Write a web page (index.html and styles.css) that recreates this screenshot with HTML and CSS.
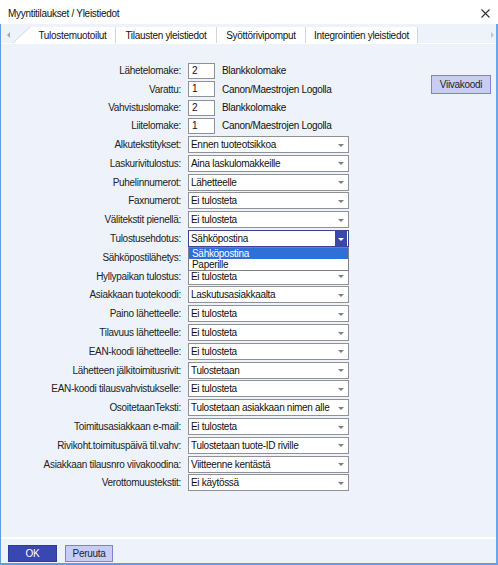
FILE: index.html
```html
<!DOCTYPE html>
<html lang="fi">
<head>
<meta charset="utf-8">
<title>Myyntitilaukset / Yleistiedot</title>
<link rel="stylesheet" href="styles.css">
</head>
<body>
<div class="window">
  <div class="titlebar">
    <span class="title">Myyntitilaukset / Yleistiedot</span>
    <svg class="close" width="9" height="9" viewBox="0 0 9 9"><path d="M0.5 0.5L8.5 8.5M8.5 0.5L0.5 8.5" stroke="#333" stroke-width="1.1" fill="none"/></svg>
  </div>
  <div class="frame">
    <div class="tabstrip">
      <div class="tab-prev"><span class="arrow-left"></span></div>
      <svg class="tab-slant" width="17" height="16" viewBox="0 0 17 16"><polygon points="0,16 17,0 17,16" fill="#fff"/><line x1="0" y1="16" x2="17" y2="0" stroke="#d3d6de" stroke-width="1"/></svg>
      <div class="tabs">
        <div class="tab tab-active t1">Tulostemuotoilut</div>
        <div class="tab t2">Tilausten yleistiedot</div>
        <div class="tab t3">Syöttörivipomput</div>
        <div class="tab t4">Integrointien yleistiedot</div>
      </div>
      <div class="tab-next"><span class="arrow-right"></span></div>
    </div>

    <div class="panel">
      <div class="form">
        <label class="lbl">Lähetelomake:</label>
        <div class="inrow"><span class="box">2</span><span class="boxtext">Blankkolomake</span></div>
        <label class="lbl">Varattu:</label>
        <div class="inrow"><span class="box">1</span><span class="boxtext">Canon/Maestrojen Logolla</span></div>
        <label class="lbl">Vahvistuslomake:</label>
        <div class="inrow"><span class="box">2</span><span class="boxtext">Blankkolomake</span></div>
        <label class="lbl">Liitelomake:</label>
        <div class="inrow"><span class="box">1</span><span class="boxtext">Canon/Maestrojen Logolla</span></div>

        <label class="lbl">Alkutekstitykset:</label>
        <div class="select"><span class="val">Ennen tuoteotsikkoa</span><span class="caret"></span></div>
        <label class="lbl">Laskurivitulostus:</label>
        <div class="select"><span class="val">Aina laskulomakkeille</span><span class="caret"></span></div>
        <label class="lbl">Puhelinnumerot:</label>
        <div class="select"><span class="val">Lähetteelle</span><span class="caret"></span></div>
        <label class="lbl">Faxnumerot:</label>
        <div class="select"><span class="val">Ei tulosteta</span><span class="caret"></span></div>
        <label class="lbl">Välitekstit pienellä:</label>
        <div class="select"><span class="val">Ei tulosteta</span><span class="caret"></span></div>
        <label class="lbl">Tulostusehdotus:</label>
        <div class="select select-open">
          <span class="val">Sähköpostina</span><span class="dropbtn"><span class="caret caret-white"></span></span>
          <div class="droplist">
            <div class="opt opt-selected">Sähköpostina</div>
            <div class="opt">Paperille</div>
          </div>
        </div>
        <label class="lbl">Sähköpostilähetys:</label>
        <div class="select"><span class="val"></span><span class="caret"></span></div>
        <label class="lbl">Hyllypaikan tulostus:</label>
        <div class="select"><span class="val">Ei tulosteta</span><span class="caret"></span></div>
        <label class="lbl">Asiakkaan tuotekoodi:</label>
        <div class="select"><span class="val">Laskutusasiakkaalta</span><span class="caret"></span></div>
        <label class="lbl">Paino lähetteelle:</label>
        <div class="select"><span class="val">Ei tulosteta</span><span class="caret"></span></div>
        <label class="lbl">Tilavuus lähetteelle:</label>
        <div class="select"><span class="val">Ei tulosteta</span><span class="caret"></span></div>
        <label class="lbl">EAN-koodi lähetteelle:</label>
        <div class="select"><span class="val">Ei tulosteta</span><span class="caret"></span></div>
        <label class="lbl">Lähetteen jälkitoimitusrivit:</label>
        <div class="select"><span class="val">Tulostetaan</span><span class="caret"></span></div>
        <label class="lbl">EAN-koodi tilausvahvistukselle:</label>
        <div class="select"><span class="val">Ei tulosteta</span><span class="caret"></span></div>
        <label class="lbl">OsoitetaanTeksti:</label>
        <div class="select"><span class="val">Tulostetaan asiakkaan nimen alle</span><span class="caret"></span></div>
        <label class="lbl">Toimitusasiakkaan e-mail:</label>
        <div class="select"><span class="val">Ei tulosteta</span><span class="caret"></span></div>
        <label class="lbl">Rivikoht.toimituspäivä til.vahv:</label>
        <div class="select"><span class="val">Tulostetaan tuote-ID riville</span><span class="caret"></span></div>
        <label class="lbl">Asiakkaan tilausnro viivakoodina:</label>
        <div class="select"><span class="val">Viitteenne kentästä</span><span class="caret"></span></div>
        <label class="lbl">Verottomuustekstit:</label>
        <div class="select"><span class="val">Ei käytössä</span><span class="caret"></span></div>
      </div>
      <div class="side">
        <button class="btn btn-light btn-barcode">Viivakoodi</button>
      </div>
    </div>

    <div class="buttonbar">
      <button class="btn btn-primary">OK</button>
      <button class="btn btn-light">Peruuta</button>
    </div>
  </div>
</div>
</body>
</html>
```

FILE: styles.css
```css
html, body {
  margin: 0;
  padding: 0;
}

body {
  width: 498px;
  height: 565px;
  overflow: hidden;
  background: #ffffff;
  font-family: "Liberation Sans", Arial, sans-serif;
  font-size: 10px;
  letter-spacing: -0.3px;
  color: #1e1e1e;
}

.window {
  display: flex;
  flex-direction: column;
  height: 565px;
}

/* title bar */
.titlebar {
  height: 24px;
  flex: none;
  display: flex;
  align-items: center;
  justify-content: space-between;
  padding: 0 8px 0 8px;
  background: #ffffff;
}

.title {
  color: #111;
  padding-top: 2px;
}

.close {
  margin-top: 2px;
}

/* window frame */
.frame {
  flex: 1;
  display: flex;
  flex-direction: column;
  border-left: 1px solid #5b9de6;
  border-right: 2px solid #6aa7ea;
  border-bottom: 2px solid #5b9de6;
  min-height: 0;
}

/* tab strip */
.tabstrip {
  height: 20px;
  flex: none;
  display: flex;
  align-items: flex-end;
  background: #eef2fa;
  border-bottom: 1px solid #ffffff;
  box-sizing: border-box;
}

.tab-prev {
  width: 12px;
  height: 16px;
  display: flex;
  align-items: center;
  justify-content: center;
}

.arrow-left {
  width: 0;
  height: 0;
  border-top: 3px solid transparent;
  border-bottom: 3px solid transparent;
  border-right: 3px solid #a5a8b0;
  margin-left: 2px;
}

.tab-slant {
  display: block;
  flex: none;
}

.tabs {
  display: flex;
  height: 16px;
  background: #ffffff;
}

.tab {
  height: 16px;
  box-sizing: border-box;
  display: flex;
  align-items: center;
  justify-content: center;
  border-right: 1px solid #d3d6de;
  color: #141414;
  white-space: nowrap;
}

.tab-active {
  color: #14143a;
}

.t1 { width: 86px; }
.t2 { width: 101px; }
.t3 { width: 89px; }
.t4 { width: 112px; }

.tab-next {
  flex: 1;
  height: 16px;
  display: flex;
  align-items: center;
  justify-content: flex-end;
  padding-right: 2px;
}

.arrow-right {
  width: 0;
  height: 0;
  border-top: 3px solid transparent;
  border-bottom: 3px solid transparent;
  border-left: 3px solid #c3c6cc;
}

/* main panel */
.panel {
  flex: 1;
  display: flex;
  background: #eef2fa;
  border-bottom: 2px solid #ffffff;
  padding-top: 18.5px;
  min-height: 0;
}

.form {
  display: grid;
  grid-template-columns: 180px 161px;
  grid-template-rows: repeat(4, 16.6px);
  grid-auto-rows: 17px;
  column-gap: 7px;
  row-gap: 1.8px;
  align-items: center;
  align-content: start;
}

.lbl {
  text-align: right;
  white-space: nowrap;
  color: #222;
}

.inrow {
  display: flex;
  align-items: center;
  gap: 7px;
  height: 100%;
}

.box {
  width: 27px;
  height: 16px;
  box-sizing: border-box;
  border: 1px solid #8f9196;
  background: #ffffff;
  padding-left: 3px;
  line-height: 14px;
  color: #111;
}

.boxtext {
  white-space: nowrap;
  color: #111;
}

.select {
  position: relative;
  height: 17px;
  box-sizing: border-box;
  border: 1px solid #8f9196;
  background: #ffffff;
  display: flex;
  align-items: center;
  padding-left: 2px;
}

.val {
  flex: 1;
  white-space: nowrap;
  overflow: hidden;
  color: #111;
}

.caret {
  width: 0;
  height: 0;
  border-left: 3px solid transparent;
  border-right: 3px solid transparent;
  border-top: 3px solid #7d7f85;
  margin: 1px 4px 0 4px;
}

.select-open {
  border-color: #3a449c;
  z-index: 3;
}

.dropbtn {
  align-self: stretch;
  width: 12px;
  margin: 0 1px 0 0;
  background: #3c47a8;
  display: flex;
  align-items: center;
  justify-content: center;
}

.caret-white {
  border-top-color: #ffffff;
  margin: 1px 0 0 0;
}

.droplist {
  position: absolute;
  left: -1px;
  right: -1px;
  top: 16px;
  background: #ffffff;
  border: 1px solid #7c7f86;
  z-index: 5;
}

.opt {
  height: 11px;
  line-height: 11px;
  padding-left: 3px;
  overflow: hidden;
  color: #111;
  white-space: nowrap;
}

.opt-selected {
  background: #2e6fd8;
  color: #ffffff;
}

.side {
  margin-left: auto;
  padding: 12px 5px 0 0;
}

/* buttons */
.btn {
  font-family: inherit;
  font-size: 10px;
  letter-spacing: -0.3px;
  height: 17px;
  box-sizing: border-box;
  padding: 0;
  margin: 0;
  cursor: default;
}

.btn-light {
  width: 48px;
  background: #c9cdf2;
  border: 1px solid #7d83cf;
  color: #1e1e2e;
}

.btn-primary {
  width: 49px;
  background: #3947b3;
  border: 1px solid #2f3c9e;
  color: #ffffff;
}

.btn-barcode {
  width: 60px;
  height: 19px;
}

.buttonbar {
  height: 24px;
  flex: none;
  display: flex;
  align-items: flex-start;
  gap: 8px;
  padding: 6px 0 0 7px;
  box-sizing: border-box;
  background: #eef2fa;
}
```
